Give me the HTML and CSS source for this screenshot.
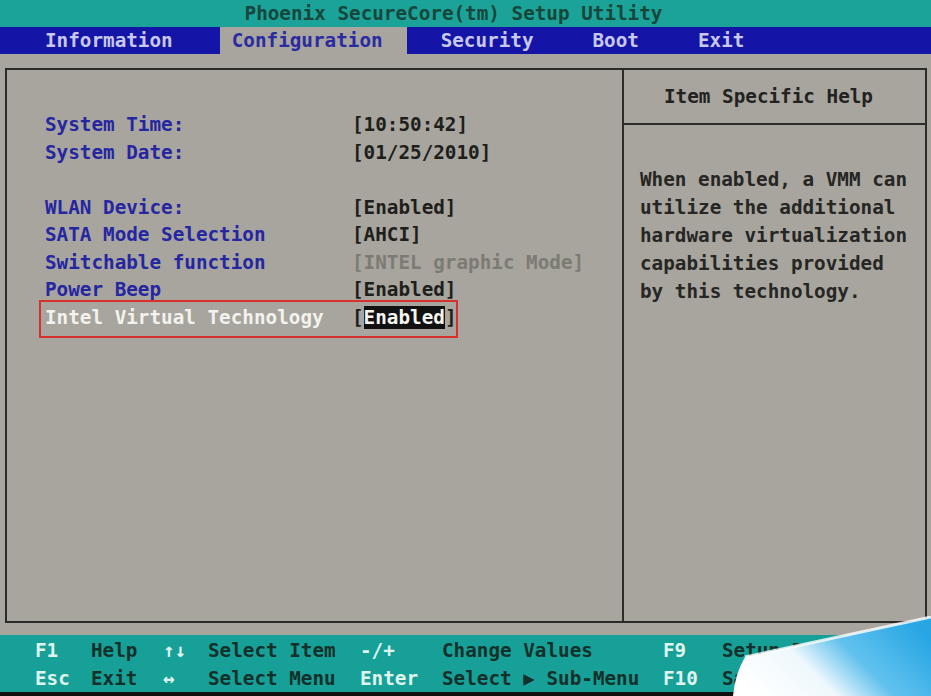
FILE: index.html
```html
<!DOCTYPE html>
<html lang="en">
<head>
    <meta charset="UTF-8">
    <meta name="viewport" content="width=device-width, initial-scale=1.0">
    <title>Phoenix SecureCore Setup Utility</title>
    <link rel="stylesheet" href="styles.css">
</head>
<body>
    <div class="screen">
        <header class="title">Phoenix SecureCore(tm) Setup Utility</header>

        <nav class="menu">
            <span class="tab">Information</span>
            <span class="tab active">Configuration</span>
            <span class="tab">Security</span>
            <span class="tab">Boot</span>
            <span class="tab">Exit</span>
        </nav>

        <main class="workspace">
            <div class="panel">
                <section class="settings">
                    <div class="row"><span class="label">System Time:</span><span class="value">[10:50:42]</span></div>
                    <div class="row"><span class="label">System Date:</span><span class="value">[01/25/2010]</span></div>
                    <div class="row blank"></div>
                    <div class="row"><span class="label">WLAN Device:</span><span class="value">[Enabled]</span></div>
                    <div class="row"><span class="label">SATA Mode Selection</span><span class="value">[AHCI]</span></div>
                    <div class="row"><span class="label">Switchable function</span><span class="value disabled">[INTEL graphic Mode]</span></div>
                    <div class="row"><span class="label">Power Beep</span><span class="value">[Enabled]</span></div>
                    <div class="row selected"><span class="label">Intel Virtual Technology</span><span class="value">[<span class="cursor">Enabled</span>]</span></div>
                </section>

                <aside class="help">
                    <div class="help-title">Item Specific Help</div>
                    <p class="help-text">When enabled, a VMM can<br>utilize the additional<br>hardware virtualization<br>capabilities provided<br>by this technology.</p>
                </aside>
            </div>
        </main>

        <footer class="keys">
            <span class="key">F1</span><span class="desc">Help</span>
            <span class="key">↑↓</span><span class="desc">Select Item</span>
            <span class="key">-/+</span><span class="desc">Change Values</span>
            <span class="key">F9</span><span class="desc">Setup Defaults</span>

            <span class="key">Esc</span><span class="desc">Exit</span>
            <span class="key">↔</span><span class="desc">Select Menu</span>
            <span class="key">Enter</span><span class="desc">Select ▶ Sub-Menu</span>
            <span class="key">F10</span><span class="desc">Save and Exit</span>
        </footer>

        <svg class="curl" width="200" height="80" viewBox="0 0 200 80">
            <defs>
                <linearGradient id="curlFill" x1="0" y1="0.7" x2="1" y2="0.3">
                    <stop offset="0" stop-color="#ffffff"/>
                    <stop offset="0.35" stop-color="#eef8fd"/>
                    <stop offset="0.6" stop-color="#62c2ee"/>
                    <stop offset="1" stop-color="#28a6e4"/>
                </linearGradient>
            </defs>
            <path d="M14 41 L200 1 L200 80 L2 80 Q4 58 14 41 Z" fill="url(#curlFill)"/>
            <path d="M14 41 L200 1" stroke="#ffffff" stroke-width="3" fill="none" opacity="0.8"/>
        </svg>
    </div>
</body>
</html>
```

FILE: styles.css
```css
* {
    margin: 0;
    padding: 0;
    box-sizing: border-box;
}

body {
    background: #111111;
    font-family: "DejaVu Sans Mono", "Liberation Mono", monospace;
    font-size: 19.3px;
    font-weight: bold;
}

.screen {
    position: relative;
    width: 931px;
    height: 696px;
    background: #a7a59d;
    overflow: hidden;
}

.title {
    height: 27px;
    line-height: 28px;
    padding-right: 24px;
    text-align: center;
    background: #1ba39a;
    color: #17463a;
}

.menu {
    display: flex;
    gap: 35px;
    height: 27px;
    line-height: 28px;
    padding-left: 33px;
    background: #1414a6;
    color: #c8c8ec;
}

.tab {
    padding: 0 12px;
}

.tab.active {
    padding-right: 24px;
    margin-right: -13px;
    background: #a7a59d;
    color: #2a2aa2;
}

.workspace {
    height: 581px;
    padding: 14px 0 0 5px;
}

.panel {
    display: grid;
    grid-template-columns: 617px 1fr;
    width: 922px;
    height: 555px;
    border: 2px solid #2c2c2a;
}

.settings {
    padding: 41px 0 0 38px;
    border-right: 2px solid #2c2c2a;
}

.row {
    display: grid;
    grid-template-columns: 307px auto;
    width: max-content;
    height: 27.5px;
    line-height: 27.5px;
}

.label {
    color: #2626a2;
}

.value {
    color: #1e1e1c;
}

.value.disabled {
    color: #7c7b73;
}

.selected {
    position: relative;
}

.selected .label {
    color: #f2f2ee;
}

.selected::after {
    content: "";
    position: absolute;
    top: -4px;
    bottom: -7px;
    left: -6px;
    right: -2px;
    border: 2px solid #d8302c;
}

.cursor {
    background: #111111;
    color: #f4f4f0;
}

.help-title {
    height: 55px;
    line-height: 53px;
    padding-right: 12px;
    text-align: center;
    border-bottom: 2px solid #2c2c2a;
    color: #222220;
}

.help-text {
    padding: 41px 0 0 16px;
    line-height: 28px;
    color: #262624;
}

.keys {
    display: grid;
    grid-template-columns: 56px 72px 45px 152px 82px 221px 59px auto;
    height: 61px;
    padding: 2px 0 0 35px;
    line-height: 27.5px;
    background: #17a098;
    border-bottom: 4px solid #111111;
    white-space: nowrap;
}

.key {
    color: #def4ec;
}

.desc {
    color: #14302a;
}

.curl {
    position: absolute;
    right: 0;
    bottom: 0;
}
```
